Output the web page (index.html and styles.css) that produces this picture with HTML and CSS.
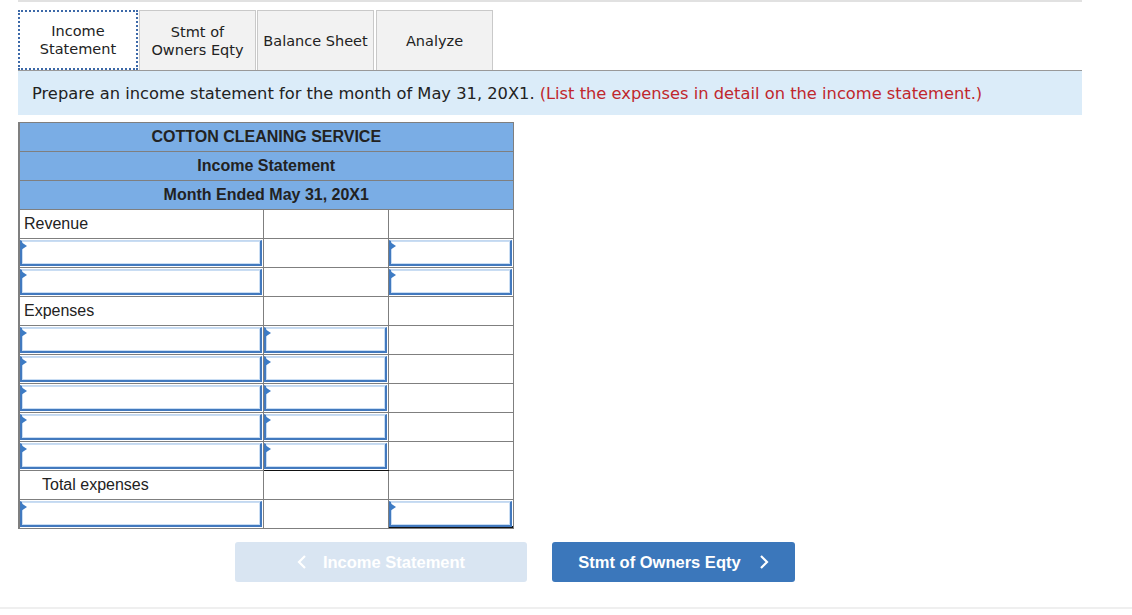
FILE: index.html
```html
<!DOCTYPE html>
<html>
<head>
<meta charset="utf-8">
<link rel="stylesheet" href="styles.css">
</head>
<body>
<div class="topbar"></div>
<div class="page">
  <div class="tabs">
    <div class="tab active">Income<br>Statement</div>
    <div class="tab">Stmt of<br>Owners Eqty</div>
    <div class="tab">Balance Sheet</div>
    <div class="tab">Analyze</div>
  </div>
  <div class="prompt">Prepare an income statement for the month of May 31, 20X1. <span class="red">(List the expenses in detail on the income statement.)</span></div>

  <table class="stmt">
    <colgroup><col class="c1"><col class="c2"><col class="c3"></colgroup>
    <tr class="hd"><td colspan="3">COTTON CLEANING SERVICE</td></tr>
    <tr class="hd"><td colspan="3">Income Statement</td></tr>
    <tr class="hd"><td colspan="3">Month Ended May 31, 20X1</td></tr>
    <tr><td class="lbl">Revenue</td><td></td><td></td></tr>
    <tr><td class="in"><div class="box"><span class="tri"></span></div></td><td></td><td class="in"><div class="box"><span class="tri"></span></div></td></tr>
    <tr><td class="in"><div class="box"><span class="tri"></span></div></td><td></td><td class="in"><div class="box"><span class="tri"></span></div></td></tr>
    <tr><td class="lbl">Expenses</td><td></td><td></td></tr>
    <tr><td class="in"><div class="box"><span class="tri"></span></div></td><td class="in"><div class="box"><span class="tri"></span></div></td><td></td></tr>
    <tr><td class="in"><div class="box"><span class="tri"></span></div></td><td class="in"><div class="box"><span class="tri"></span></div></td><td></td></tr>
    <tr><td class="in"><div class="box"><span class="tri"></span></div></td><td class="in"><div class="box"><span class="tri"></span></div></td><td></td></tr>
    <tr><td class="in"><div class="box"><span class="tri"></span></div></td><td class="in"><div class="box"><span class="tri"></span></div></td><td></td></tr>
    <tr><td class="in"><div class="box"><span class="tri"></span></div></td><td class="in under"><div class="box"><span class="tri"></span></div></td><td></td></tr>
    <tr><td class="lbl indent">Total expenses</td><td></td><td></td></tr>
    <tr><td class="in"><div class="box"><span class="tri"></span></div></td><td></td><td class="in dbl"><div class="box"><span class="tri"></span></div></td></tr>
  </table>

  <div class="nav">
    <div class="btn prev">
      <svg width="10" height="16" viewBox="0 0 10 16"><path d="M8 2 L2 8 L8 14" fill="none" stroke="#ffffff" stroke-width="2.2"/></svg>
      <span>Income Statement</span>
    </div>
    <div class="btn next">
      <span>Stmt of Owners Eqty</span>
      <svg width="10" height="16" viewBox="0 0 10 16"><path d="M2 2 L8 8 L2 14" fill="none" stroke="#ffffff" stroke-width="2.2"/></svg>
    </div>
  </div>
</div>
<div class="bottomline"></div>
</body>
</html>
```

FILE: styles.css
```css
* { box-sizing: border-box; }
body {
  margin: 0;
  background: #ffffff;
  font-family: "DejaVu Sans", Verdana, sans-serif;
  color: #222;
}
.topbar {
  margin-left: 18px;
  width: 1064px;
  height: 2px;
  background: #e1e1e1;
}
.page {
  margin-left: 18px;
  width: 1064px;
}
.tabs {
  display: flex;
  gap: 1px;
  margin-top: 8px;
  height: 60px;
}
.tab {
  width: 117px;
  height: 60px;
  background: #f2f2f2;
  border: 1px solid #c9c9c9;
  border-bottom: none;
  display: flex;
  align-items: center;
  justify-content: center;
  text-align: center;
  font-size: 14.5px;
  line-height: 18px;
  color: #222;
}
.tab.active {
  width: 120px;
  background: #ffffff;
  border: 2px dotted #3d69a8;
}
.tab:nth-child(4) { margin-left: 1px; }
.prompt {
  border-top: 1px solid #999;
  background: #dbecf9;
  height: 45px;
  padding-left: 14px;
  display: flex;
  align-items: center;
  font-size: 16.3px;
  color: #222;
}
.red { color: #c0272d; margin-left: 5px; }

.stmt {
  margin-top: 7px;
  border-collapse: collapse;
  font-family: "Liberation Sans", Arial, sans-serif;
  font-size: 16px;
  border-left: 2px solid #7f7f7f;
}
.c1 { width: 244px; }
.c2 { width: 125px; }
.c3 { width: 125px; }
.stmt td {
  border: 1px solid #7f7f7f;
  height: 29px;
  padding: 0;
}
.hd td {
  background: #7aade5;
  font-weight: bold;
  text-align: center;
  color: #222;
}
.lbl { padding-left: 4px !important; }
.indent { padding-left: 22px !important; }
.in { position: relative; }
.box {
  position: relative;
  margin: 1px 1px 1px 0;
  height: 26px;
  border: 2px solid #4279be;
  border-top: 1px solid #c3d8f0;
  box-shadow: inset 0 0 0 1px #c9ddf3;
  background: #ffffff;
}
.tri {
  position: absolute;
  left: -1px;
  top: 1px;
  width: 0;
  height: 0;
  border-left: 6px solid #3d7bc4;
  border-top: 4px solid transparent;
  border-bottom: 4px solid transparent;
}
.stmt td.under { border-bottom: 1px solid #111; }
.stmt td.dbl { border-top: 1px solid #111; box-shadow: inset 0 -2px 0 #111; }

.nav {
  display: flex;
  gap: 25px;
  margin-top: 13px;
  padding-left: 217px;
}
.btn {
  height: 40px;
  border-radius: 3px;
  display: flex;
  align-items: center;
  justify-content: center;
  gap: 18px;
  font-family: "Liberation Sans", Arial, sans-serif;
  font-weight: bold;
  font-size: 16.5px;
  color: #fff;
}
.prev {
  width: 292px;
  background: #d9e5f2;
  gap: 16px;
}
.next {
  width: 243px;
  background: #3b77bb;
}
.bottomline {
  margin-top: 25px;
  height: 2px;
  background: #efefef;
}
```
